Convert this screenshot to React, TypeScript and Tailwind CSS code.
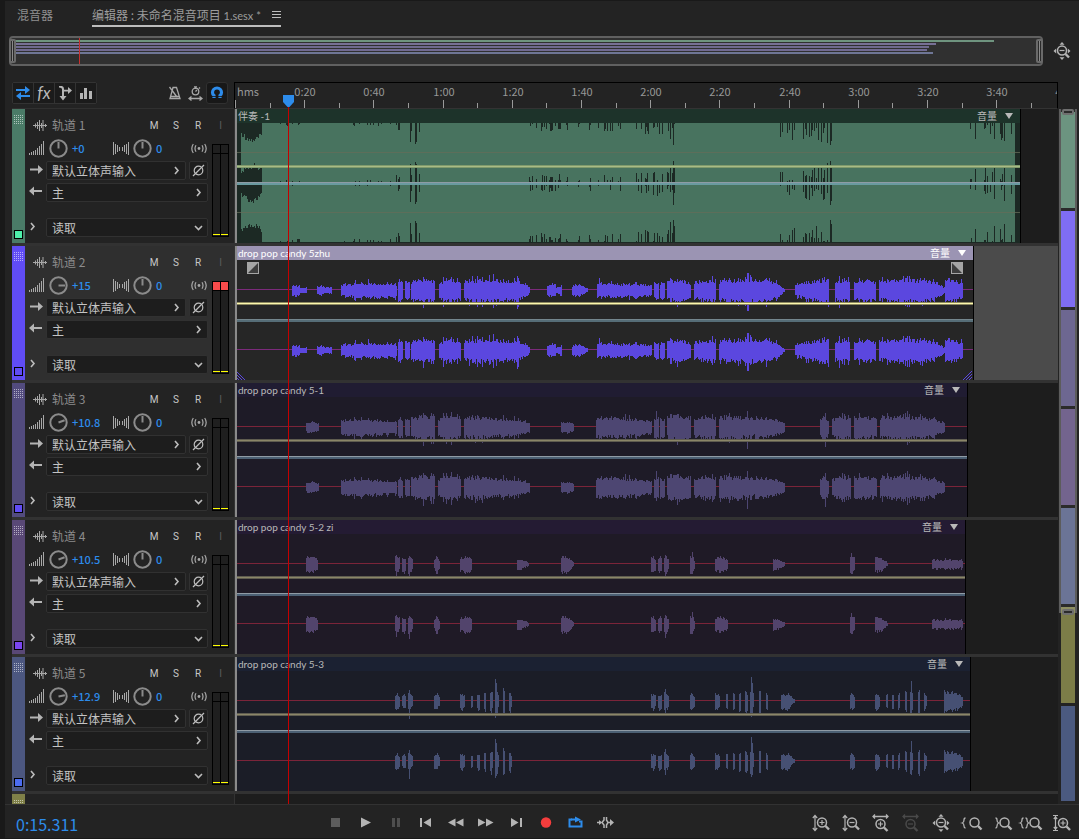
import React from "react";

type Burst = [start: number, end: number, head: number, mid: number, tail: number];
type Peak = [x: number, up: number, down: number];

interface Track {
  name: string;
  gain: string;
  angle: number;
  strip: string;
  led: string;
  selected?: boolean;
  clip: string;
  width: number;
  title: string;
  body: string;
  wave: string;
  axis: string;
  bursts: Burst[];
  peaks: Peak[];
}

const noise = (n: number) => {
  const s = Math.sin(n * 12.9898) * 43758.5453;
  return s - Math.floor(s);
};

const verse: Burst[] = [
  [106, 162, 6, 8, 7],
  [163, 168, 12, 12, 10],
  [170, 175, 9, 10, 9],
  [176, 200, 10, 12, 10],
  [204, 226, 8, 12, 10],
  [229, 280, 11, 12, 10],
  [280, 295, 12, 8, 4],
];

const backing: Burst[] = [
  [71, 84, 5, 6, 4],
  [106, 162, 8, 9, 6],
  [163, 168, 10, 11, 10],
  [170, 175, 9, 10, 9],
  [176, 200, 10, 13, 12],
  [203, 226, 9, 13, 11],
  [229, 265, 11, 11, 9],
  [265, 295, 10, 9, 5],
  [326, 339, 5, 6, 4],
  [361, 417, 10, 10, 7],
  [419, 424, 10, 11, 10],
  [425, 430, 10, 10, 9],
  [432, 456, 11, 13, 11],
  [459, 481, 9, 12, 11],
  [484, 520, 11, 12, 9],
  [520, 550, 11, 10, 5],
  [585, 594, 9, 13, 8],
  [597, 616, 9, 12, 11],
  [619, 642, 11, 12, 10],
  [645, 690, 11, 12, 10],
  [690, 710, 11, 9, 5],
];

const tracks: Track[] = [
  {
    name: "轨道 1", gain: "+0", angle: 0, strip: "bg-[#4a7b67]", led: "bg-[#4df0ab]",
    clip: "伴奏 -1", width: 785, title: "bg-[#1d332a]", body: "bg-[#1c2924]",
    wave: "#48735f", axis: "#646c58", bursts: [], peaks: [],
  },
  {
    name: "轨道 2", gain: "+15", angle: 90, strip: "bg-[#604cf5]", led: "bg-[#604cf5]", selected: true,
    clip: "drop pop candy 5zhu", width: 738, title: "bg-[#9b94b3]", body: "bg-[#262626]",
    wave: "#5b47df", axis: "#7b2a7b",
    bursts: [
      [57, 65, 5, 6, 5], [65, 72, 3, 3, 3],
      [82, 90, 4, 6, 4], [90, 97, 3, 3, 4],
      ...verse,
      [312, 321, 5, 7, 6], [321, 327, 3, 4, 6],
      [337, 353, 5, 6, 2],
      [362, 417, 7, 7, 6], [419, 424, 9, 9, 8], [425, 430, 7, 9, 9],
      [432, 456, 9, 12, 8], [459, 481, 9, 11, 11], [484, 535, 10, 12, 12], [535, 550, 10, 8, 2],
      [560, 594, 6, 10, 12], [600, 615, 10, 11, 10], [619, 641, 9, 12, 10],
      [644, 695, 10, 12, 11], [695, 710, 10, 8, 3], [710, 728, 13, 11, 8],
    ],
    peaks: [[120, 10, 11], [133, 11, 7], [188, 13, 18], [208, 13, 17], [258, 16, 18], [282, 14, 19], [283, 11, 17], [364, 12, 6], [512, 17, 21], [513, 17, 21], [589, 13, 14], [604, 14, 18], [672, 14, 17]],
  },
  {
    name: "轨道 3", gain: "+10.8", angle: 70, strip: "bg-[#524b7e]", led: "bg-[#604cf5]",
    clip: "drop pop candy 5-1", width: 732, title: "bg-[#201c32]", body: "bg-[#1e1b27]",
    wave: "#4d4672", axis: "#7b2439", bursts: backing,
    peaks: [[188, 14, 19], [208, 14, 15], [390, 13, 12], [421, 16, 14], [512, 16, 22], [672, 16, 18], [590, 14, 20]],
  },
  {
    name: "轨道 4", gain: "+10.5", angle: 70, strip: "bg-[#594876]", led: "bg-[#7a45f0]",
    clip: "drop pop candy 5-2 zi", width: 730, title: "bg-[#241b33]", body: "bg-[#1f1a26]",
    wave: "#52446c", axis: "#7b2439",
    bursts: [
      [71, 83, 8, 9, 6], [160, 165, 9, 9, 7], [167, 171, 7, 9, 7], [173, 178, 9, 9, 6],
      [199, 205, 4, 10, 4], [225, 237, 7, 9, 7], [282, 294, 6, 5, 2], [326, 339, 8, 9, 2],
      [416, 421, 8, 9, 6], [423, 427, 7, 9, 7], [429, 434, 9, 9, 6], [455, 460, 9, 10, 5],
      [480, 493, 7, 8, 6], [538, 550, 6, 5, 2], [615, 620, 9, 9, 7], [640, 653, 8, 7, 2],
      [697, 710, 6, 5, 4], [710, 728, 6, 5, 4],
    ],
    peaks: [[174, 8, 15], [161, 9, 13], [430, 9, 14], [616, 11, 10], [457, 12, 10]],
  },
  {
    name: "轨道 5", gain: "+12.9", angle: 78, strip: "bg-[#4c5780]", led: "bg-[#4c6cf0]",
    clip: "drop pop candy 5-3", width: 735, title: "bg-[#1b2132]", body: "bg-[#1b1d27]",
    wave: "#465073", axis: "#7b2439",
    bursts: [
      [160, 165, 7, 9, 6], [167, 171, 6, 9, 7], [173, 178, 8, 9, 5], [199, 205, 7, 9, 5],
      [225, 230, 8, 9, 6], [236, 238, 8, 8, 8], [242, 245, 9, 9, 9], [249, 251, 10, 10, 10],
      [255, 258, 11, 12, 9], [260, 264, 12, 13, 8], [268, 270, 14, 14, 14], [274, 277, 10, 11, 6],
      [416, 421, 8, 9, 6], [423, 427, 7, 9, 7], [429, 434, 9, 9, 6], [455, 460, 8, 9, 5],
      [480, 485, 8, 9, 6], [491, 493, 8, 8, 8], [498, 500, 9, 9, 9], [504, 506, 10, 10, 10],
      [510, 513, 11, 12, 9], [515, 519, 12, 13, 8], [524, 526, 14, 14, 14], [531, 533, 10, 10, 8],
      [546, 560, 8, 9, 2], [615, 620, 7, 9, 6], [640, 645, 8, 9, 6], [651, 653, 8, 8, 8],
      [657, 659, 8, 8, 8], [663, 665, 9, 9, 9], [670, 672, 11, 11, 11], [675, 678, 12, 13, 9],
      [683, 685, 14, 14, 14], [689, 692, 10, 10, 6], [709, 716, 11, 12, 9], [716, 728, 10, 9, 6],
    ],
    peaks: [[174, 11, 18], [260, 22, 17], [261, 18, 15], [430, 12, 14], [516, 24, 16], [517, 18, 14], [676, 20, 14]],
  },
];

const column = (x: number, y0: number, y1: number) => `M${x} ${y0}h1V${y1}h-1z`;

function burstPath(t: Track, centre: number) {
  let d = "";
  for (const [a, b, head, mid, tail] of t.bursts) {
    for (let x = a; x < b; x++) {
      const p = (x - a) / Math.max(1, b - a - 1);
      const amp = p < 0.5 ? head + (mid - head) * p * 2 : mid + (tail - mid) * (p - 0.5) * 2;
      const spike = b - a > 14 && noise(x * 5 + 2) > 0.86 ? 0.3 : 0;
      const up = Math.round(amp * (0.62 + 0.36 * noise(x + t.width) + spike));
      const down = Math.round(amp * (0.76 + 0.42 * noise(x * 3 + t.width) + spike));
      d += column(x, centre - up, centre + down);
    }
  }
  for (const [x, up, down] of t.peaks) d += column(x, centre - up, centre + down);
  return d;
}

const quiet: [start: number, end: number, depth: number, chance: number][] = [
  [42, 72, 4, 0.2],
  [98, 160, 3, 0.2],
  [161, 175, 9, 0.35],
  [289, 326, 9, 0.35],
  [330, 346, 7, 0.3],
  [354, 386, 9, 0.35],
  [398, 434, 13, 0.35],
  [434, 441, 22, 0.4],
  [545, 570, 17, 0.35],
  [570, 590, 19, 0.4],
  [592, 600, 22, 0.4],
  [728, 740, 9, 0.35],
  [740, 780, 18, 0.35],
];

const drops: Record<number, number> = { 175: 19, 176: 8, 180: 21, 181: 19, 184: 9, 438: 22, 595: 22, 596: 18, 759: 16, 769: 18 };

function gap(x: number, seed: number) {
  if (x < 27) return 6 + Math.round(8 * Math.sin(((x - 5) / 24) * Math.PI) + 6 * noise(x + seed));
  let depth = drops[x] ?? 0;
  for (const [a, b, max, chance] of quiet) {
    if (x >= a && x < b && noise(x * 7 + 1) < chance) depth = Math.max(depth, Math.round(max * noise(x + seed)));
  }
  return depth;
}

function fullPath() {
  let d = "";
  for (let x = 6; x < 780; x++) {
    d += column(x, gap(x, 3), 60 - gap(x, 11));
    d += column(x, 60 + gap(x, 23), 119 - gap(x, 31));
  }
  return d;
}

function Waveform({ track }: { track: Track }) {
  const full = track.bursts.length === 0;
  const sel = track.selected;
  const w = track.width;
  return (
    <svg width={w} height={120} viewBox={`0 0 ${w} 120`} shapeRendering="crispEdges" className="block" aria-hidden="true">
      {!full && <path d={`M0 29h${w}v1H0zM0 89h${w}v1H0z`} fill={track.axis} />}
      <path d={full ? fullPath() : burstPath(track, 30) + burstPath(track, 90)} fill={track.wave} />
      {full && <path d={`M0 29h${w}v1H0zM0 89h${w}v1H0z`} fill={track.axis} opacity="0.75" />}
      <rect y="42" width={w} height="3" fill={sel ? "#8d8960" : full ? "#7f9a6c" : "#5f5c50"} />
      <rect y="43" width={w} height="1" fill={sel ? "#fdf8ae" : full ? "#a9bb86" : "#8b8668"} />
      <rect y="59" width={w} height="1" fill={sel ? "#74868d" : "#8f9ba5"} />
      <rect y="60" width={w} height="2" fill={full ? "#6a9aa0" : sel ? "#566d77" : "#4c6074"} />
      {sel && (
        <path
          d={`M1 111l9 9M1 114l6 6M1 117l3 3M${w - 1} 111l-9 9M${w - 1} 114l-6 6M${w - 1} 117l-3 3`}
          stroke="#5b47df" fill="none"
        />
      )}
    </svg>
  );
}

function FadeHandle({ flip }: { flip?: boolean }) {
  return (
    <svg width="12" height="12" viewBox="0 0 12 12" aria-hidden="true" className={flip ? "-scale-x-100" : ""}>
      <rect width="12" height="12" fill="#a5a5a5" />
      <path d="M11 1v10H1z" fill="#3d3d3d" />
    </svg>
  );
}

function Knob({ angle, label }: { angle: number; label: string }) {
  return (
    <label className="relative block size-[19px] shrink-0">
      <svg width="19" height="19" viewBox="0 0 19 19" fill="none" stroke="#8b8b8b" strokeWidth="2" aria-hidden="true">
        <circle cx="9.5" cy="9.5" r="8.2" />
        <path d="M9.5 9.5V3" transform={`rotate(${angle} 9.5 9.5)`} />
      </svg>
      <input type="range" min="-100" max="100" defaultValue="0" aria-label={label} className="sr-only" />
    </label>
  );
}

function Picker({ label, value, down, className }: { label: string; value: string; down?: boolean; className: string }) {
  return (
    <div className={`relative h-[19px] ${className}`}>
      <select
        aria-label={label}
        className="block h-full w-full appearance-none rounded-[2px] border border-[#313131] bg-[#1d1d1d] pl-[5px] text-[12px] leading-[17px] text-[#c4c4c4]"
      >
        <option>{value}</option>
      </select>
      <svg
        width="9" height="9" viewBox="0 0 9 9" fill="none" stroke="#bdbdbd" strokeWidth="1.6" aria-hidden="true"
        className="pointer-events-none absolute top-[5px] right-[5px]"
      >
        <path d={down ? "M1 3l3.5 3.5L8 3" : "M3 1l3 3.5L3 8"} />
      </svg>
    </div>
  );
}

function Grip() {
  return (
    <svg width="9" height="10" viewBox="0 0 9 10" fill="#ffffff" opacity="0.55" shapeRendering="crispEdges" aria-hidden="true">
      {[0, 2, 4, 6, 8].map((y) => [0, 2, 4, 6, 8].map((x) => <rect key={`${x}-${y}`} x={x} y={y} width="1" height="1" />))}
    </svg>
  );
}

function Meter({ hot }: { hot?: boolean }) {
  return (
    <div className="grid h-[93px] w-[17px] grid-cols-2 gap-px border border-black bg-black">
      {[0, 1].map((c) => (
        <div key={c} className="flex flex-col">
          <div className={hot ? "h-2 bg-[#f84b4b]" : "h-2 bg-[#1f1f1f]"} />
          <div className="mt-px flex flex-1 flex-col justify-end bg-[#1f1f1f] pb-px">
            <div className="h-px bg-[#ffff00]" />
          </div>
        </div>
      ))}
    </div>
  );
}

function TrackHeader({ track }: { track: Track }) {
  return (
    <div className={`flex w-[222px] shrink-0 ${track.selected ? "bg-[#2f2f2f]" : "bg-[#232323]"}`}>
      <div className={`flex w-[13px] flex-col items-center justify-between pt-1.5 pb-1 ${track.strip}`}>
        <Grip />
        <div className={`size-[9px] border border-black ${track.led}`} />
      </div>
      <div className="flex w-[184px] flex-col pt-2">
        <div className="flex h-4 items-center pl-2">
          <svg width="14" height="12" viewBox="0 0 14 12" fill="#a8a8a8" aria-hidden="true">
            <path d="M0 6h14v1H0zM2 4.500h1v4H2zM4 3h1v7H4zM6 1h1v11H6zM8 4h1v5H8zM9.500 1h1v11h-1zM12 5h1v3h-1z" />
          </svg>
          <span className="ml-[5px] flex-1 text-[12px] leading-4 text-[#8c8c8c]">{track.name}</span>
          {["M", "S", "R"].map((b) => (
            <button key={b} className="w-[22px] pt-0.5 font-[Roboto] text-[10px] leading-[14px] text-[#c8c8c8]">{b}</button>
          ))}
        </div>
        <div className="mt-[5px] flex h-5 items-center gap-1 pr-px pl-1">
          <svg width="16" height="14" viewBox="0 0 16 14" fill="#a8a8a8" shapeRendering="crispEdges" aria-hidden="true">
            {[2, 3, 4, 5, 7, 9, 11, 14].map((h, i) => <rect key={h} x={i * 2} y={14 - h} width="1" height={h} />)}
          </svg>
          <Knob angle={track.angle} label={`${track.name} 音量`} />
          <span className="w-[37px] text-[11px] leading-5 font-medium text-[#2d8ceb]">{track.gain}</span>
          <svg width="16" height="13" viewBox="0 0 16 13" fill="#a8a8a8" shapeRendering="crispEdges" aria-hidden="true">
            {[13, 10, 7, 4, 4, 7, 10, 13].map((h, i) => (
              <rect key={i} x={i * 2 + (i > 3 ? 1 : 0)} y={(13 - h) / 2} width="1" height={h} />
            ))}
          </svg>
          <Knob angle={0} label={`${track.name} 声像`} />
          <span className="text-[11px] leading-5 font-medium text-[#2d8ceb]">0</span>
          <svg width="17" height="11" viewBox="0 0 17 11" fill="none" stroke="#a8a8a8" strokeWidth="1.2" className="ml-auto" aria-hidden="true">
            <circle cx="8" cy="5.5" r="1.4" fill="#a8a8a8" stroke="none" />
            <path d="M5 2.2q-2 3.3 0 6.6M2.300 1q-3 4.500 0 9M11 2.200q2 3.300 0 6.600M13.700 1q3 4.500 0 9" />
          </svg>
        </div>
        <div className="mt-[3px] flex items-start gap-[3px] pr-px pl-1">
          <div className="flex flex-1 gap-0.5">
            <svg width="15" height="17" viewBox="0 0 15 17" aria-hidden="true">
              <path d="M1 8.500h9" stroke="#b4b4b4" strokeWidth="2" />
              <path d="M9 4l5 4.500L9 13z" fill="#b4b4b4" />
            </svg>
            <Picker label={`${track.name} 输入`} value="默认立体声输入" className="flex-1" />
          </div>
          <button aria-label="反相" className="flex size-[19px] items-center justify-center rounded-[2px] border border-[#313131] bg-[#1d1d1d]">
            <svg width="13" height="13" viewBox="0 0 13 13" fill="none" stroke="#bdbdbd" strokeWidth="1.200" aria-hidden="true">
              <circle cx="6.500" cy="6.500" r="4.300" />
              <path d="M1 12L12 1" />
            </svg>
          </button>
        </div>
        <div className="mt-[3px] flex gap-0.5 pr-px pl-1">
          <svg width="15" height="17" viewBox="0 0 15 17" aria-hidden="true">
            <path d="M4 8h9" stroke="#b4b4b4" strokeWidth="2" />
            <path d="M5 3.500L0 8l5 4.500z" fill="#b4b4b4" />
          </svg>
          <Picker label={`${track.name} 输出`} value="主" className="flex-1" />
        </div>
        <div className="mt-4 flex gap-0.5 pr-px pl-1">
          <button aria-label="展开" className="flex w-[15px] items-center pb-1">
            <svg width="8" height="10" viewBox="0 0 8 10" fill="none" stroke="#bdbdbd" strokeWidth="1.600" aria-hidden="true">
              <path d="M2 2l3 3.500L2 9" />
            </svg>
          </button>
          <Picker label={`${track.name} 自动化`} value="读取" down className="flex-1" />
        </div>
      </div>
      <div className="ml-[3px] flex w-[17px] flex-col items-center pt-2">
        <button className="h-4 pt-0.5 font-[Roboto] text-[10px] leading-[14px] text-[#5c5c5c]">I</button>
        <div className="mt-[11px]">
          <Meter hot={track.selected} />
        </div>
      </div>
    </div>
  );
}

function TrackRow({ track }: { track: Track }) {
  const text = track.selected ? "text-white" : "text-[#b9b9b9]";
  return (
    <div className="flex h-[137px] shrink-0 border-b-[3px] border-[#323232]">
      <TrackHeader track={track} />
      <div className={`flex min-w-0 flex-1 overflow-hidden border-l border-[#333333] ${track.selected ? "bg-[#4b4b4b]" : "bg-[#1d1d1d]"}`}>
        <div className={`relative shrink-0 border-r border-black ${track.body}`}>
          <div className={`flex h-3.5 items-center pr-[7px] pl-[3px] text-[10px] leading-[14px] ${track.title} ${text}`}>
            <span className="flex-1 font-['Liberation_Sans_Narrow',Lato,'Noto_Sans_CJK_SC',sans-serif]">{track.clip}</span>
            <button className="flex items-center gap-2">
              音量
              <svg width="8" height="6" viewBox="0 0 8 6" fill="currentColor" aria-hidden="true">
                <path d="M0 0h8L4 6z" />
              </svg>
            </button>
          </div>
          <Waveform track={track} />
          <div className="absolute inset-y-0 left-0 w-0.5 bg-[#8a8a8a]" />
          {track.selected && (
            <div className="absolute inset-x-0 top-4 flex justify-between pr-2.5 pl-3">
              <FadeHandle />
              <FadeHandle flip />
            </div>
          )}
        </div>
      </div>
    </div>
  );
}

const tickX = (seconds: number) => Math.round(seconds * 3.46);
const clock = (s: number) => `${Math.floor(s / 60)}:${String(s % 60).padStart(2, "0")}`;
const majors = Array.from({ length: 12 }, (_, i) => (i + 1) * 20);
const minors = Array.from({ length: 12 }, (_, i) => i * 20 + 10);

function Ruler() {
  return (
    <div className="relative min-w-0 flex-1 overflow-hidden border-x border-t border-b border-black border-b-[#333333] text-[11px] leading-4 text-[#979797]">
      <span className="absolute top-0 left-0.5">hms</span>
      {majors.map((s) => (
        <span key={s} className="absolute top-0 w-10 -translate-x-1/2 text-center" style={{ left: tickX(s) + 1 }}>
          {clock(s)}
        </span>
      ))}
      <svg width="840" height="25" viewBox="0 0 840 25" fill="#9a9a9a" shapeRendering="crispEdges" className="absolute top-0 left-0" aria-hidden="true">
        <rect x="0" y="17" width="1" height="8" />
        {majors.map((s) => <rect key={s} x={tickX(s)} y="17" width="1" height="8" />)}
        {minors.map((s) => <rect key={s} x={tickX(s)} y="20" width="1" height="5" />)}
      </svg>
    </div>
  );
}

function Magnifier({ x, y, sign }: { x: number; y: number; sign?: "+" | "-" }) {
  return (
    <g>
      <circle cx={x} cy={y} r="4.500" strokeWidth="1.500" />
      <path d={`M${x + 3.5} ${y + 3.5}l3.500 3.500`} strokeWidth="2.400" />
      {sign && <path d={`M${x - 2.5} ${y}h5${sign === "+" ? `M${x} ${y - 2.5}v5` : ""}`} strokeWidth="1.200" />}
    </g>
  );
}

function ZoomIcon({ children, dim }: { children: React.ReactNode; dim?: boolean }) {
  return (
    <svg width="18" height="18" viewBox="0 0 18 18" fill="none" stroke={dim ? "#4a4a4a" : "#b4b4b4"} className="overflow-visible" aria-hidden="true">
      {children}
    </svg>
  );
}

const vertical = <path d="M3 2v14M.8 4L3 1.500 5.200 4M.8 14L3 16.500 5.200 14" strokeWidth="1.200" />;
const horizontal = <path d="M1 2.500h15M3 .5L1 2.500 3 4.500M14 .5l2 2-2 2" strokeWidth="1.300" />;
const fourWay = <path d="M9 0l2.500 2.800h-5zM9 18l2.500-2.800h-5zM.5 9l2.700-2.500v5zM17.500 9l-2.700-2.500v5z" fill="#b4b4b4" stroke="none" />;
const openBrace = "M3.500 4Q2 4 2 6q0 2.500-1.700 3Q2 9.500 2 12q0 2 1.500 2";
const closeBrace = "M3.500 4Q5 4 5 6q0 2.500 1.700 3Q5 9.500 5 12q0 2-1.500 2";

const zoomTools: { label: string; icon: React.ReactNode; dim?: boolean }[] = [
  { label: "垂直放大", icon: <>{vertical}<Magnifier x={10} y={8.5} sign="+" /></> },
  { label: "垂直缩小", icon: <>{vertical}<Magnifier x={10} y={8.5} sign="-" /></> },
  { label: "水平放大", icon: <>{horizontal}<Magnifier x={8.5} y={10} sign="+" /></> },
  { label: "水平缩小", icon: <>{horizontal}<Magnifier x={8.5} y={10} sign="-" /></>, dim: true },
  { label: "全部缩小", icon: <>{fourWay}<Magnifier x={9} y={8.5} sign="-" /></> },
  { label: "放大入点", icon: <><path d={openBrace} strokeWidth="1.300" /><Magnifier x={12.5} y={8.5} /></> },
  { label: "放大出点", icon: <><path d={closeBrace} strokeWidth="1.300" /><Magnifier x={12.5} y={8.5} /></> },
  { label: "缩放至选区", icon: <><path d={openBrace} transform="translate(-2 0)" strokeWidth="1.300" /><path d={closeBrace} strokeWidth="1.300" /><Magnifier x={12.5} y={8.5} /></> },
  { label: "缩放至轨道", icon: <><path d="M1 1.500h5M1 16.500h5M3.500 2v14M1.800 5l1.700-2 1.700 2M1.800 13l1.700 2 1.700-2" strokeWidth="1.200" /><Magnifier x={11} y={9} sign="+" /></> },
];

const transport: { label: string; icon: React.ReactNode }[] = [
  { label: "停止", icon: <rect x="4" y="4" width="9" height="9" fill="#5c5c5c" /> },
  { label: "播放", icon: <path d="M4 3.500l10 5-10 5z" /> },
  { label: "暂停", icon: <path d="M5 4h3v9H5zM10 4h3v9h-3z" fill="#4e4e4e" /> },
  { label: "转到上一个", icon: <path d="M3 4h2v9H3zM14 4v9L6.500 8.500z" /> },
  { label: "快退", icon: <path d="M8.500 4.500v8L1 8.500zM16.500 4.500v8L9 8.500z" /> },
  { label: "快进", icon: <path d="M1 4.500v8l7.500-4zM9 4.500v8l7.500-4z" /> },
  { label: "转到下一个", icon: <path d="M13 4h2v9h-2zM4 4v9l7.500-4.500z" /> },
  { label: "录制", icon: <circle cx="9" cy="8.500" r="5.200" fill="#f53d3d" /> },
  {
    label: "循环播放",
    icon: <><path d="M5 5.500H2.500v7h12v-5H12" fill="none" stroke="#2d8ceb" strokeWidth="2" /><path d="M8 2.500L14 5.500l-6 3v-2H4v-2h4z" fill="#2d8ceb" /></>,
  },
  {
    label: "跳过所选项目",
    icon: <><path d="M0 8.500h4M11 8.500h4M7 3v3L5 8.500 7 11v3M9.500 3v3l1.500 2.500L9.500 11v3" fill="none" stroke="#b4b4b4" strokeWidth="1.500" /><path d="M13 5l4 3.500-4 3.500zM2 6l3 2.500-3 2.500z" /></>,
  },
];

const overview = [
  "mr-[47px] bg-[#6f947f]",
  "mr-[105px] bg-[#777096]",
  "mr-28 bg-[#6f6a8f]",
  "mr-[114px] bg-[#716a92]",
  "mr-[108px] bg-[#6f7696]",
];

function Toggle({ label, children }: { label: string; children: React.ReactNode }) {
  return (
    <button aria-label={label} className="flex size-5 items-center justify-center bg-[#1b1b1b]">
      {children}
    </button>
  );
}

export default function App() {
  return (
    <div className="flex h-screen flex-col overflow-hidden border-t border-b border-l-[5px] border-[#191919] bg-[#232323] font-['Noto_Sans_CJK_SC',sans-serif] text-[#b9b9b9]">
      <nav className="flex h-[35px] shrink-0 items-start pl-3 text-[12px] leading-4">
        <button className="mt-1.5 text-[#8f8f8f]">混音器</button>
        <div className="ml-[39px] flex h-[26px] items-center gap-[11px] border-b-2 border-[#bdbdbd] pt-1">
          <button className="whitespace-pre text-[#9c9c9c]">
            编辑器 : 未命名混音项目<span className="font-[Lato,sans-serif] text-[11px]"> 1.sesx *</span>
          </button>
          <button aria-label="面板菜单">
            <svg width="9" height="8" viewBox="0 0 9 8" fill="#bdbdbd" shapeRendering="crispEdges" aria-hidden="true">
              <path d="M0 0h9v1H0zM0 3h9v1H0zM0 6h9v1H0z" />
            </svg>
          </button>
        </div>
      </nav>

      <div className="flex h-[30px] shrink-0 items-center pr-2 pl-1">
        <div className="relative h-[30px] flex-1 rounded-[4px] border-2 border-[#606060] bg-[#303030] pt-0.5">
          <div className="flex flex-col gap-px pl-1">
            {overview.map((bar) => <div key={bar} className={`h-0.5 ${bar}`} />)}
          </div>
          <div className="absolute inset-y-0 left-[68px] w-px bg-[#c8302f]" />
          <div className="absolute -left-0.5 top-px h-6 w-[7px] rounded-[2px] border-2 border-[#6a6a6a] bg-[#2a2a2a] px-px">
            <div className="h-full w-px bg-[#8a8a8a]" />
          </div>
          <div className="absolute top-px -right-0.5 h-6 w-[7px] rounded-[2px] border-2 border-[#6a6a6a] bg-[#2a2a2a] px-px">
            <div className="h-full w-px bg-[#8a8a8a]" />
          </div>
        </div>
        <button aria-label="全部缩小" className="ml-[10px]">
          <ZoomIcon>{fourWay}<Magnifier x={9} y={8.5} sign="-" /></ZoomIcon>
        </button>
      </div>

      <div className="mt-4 flex min-h-0 flex-1 pr-0.5 pl-[7px]">
        <main className="relative flex min-w-0 flex-1 flex-col overflow-hidden">
          <div className="flex h-[27px] shrink-0">
            <div className="flex w-[222px] shrink-0 items-start justify-between border-b border-[#303030] pr-1.5">
              <div className="flex gap-px rounded-[2px] border border-[#333333] bg-[#333333]">
                <Toggle label="输入/输出">
                  <svg width="16" height="14" viewBox="0 0 16 14" aria-hidden="true">
                    <path d="M1 4h10M5 10h10" stroke="#2d8ceb" strokeWidth="2" />
                    <path d="M10 0l5 4-5 4zM6 6l-5 4 5 4z" fill="#2d8ceb" />
                  </svg>
                </Toggle>
                <Toggle label="效果">
                  <span className="font-[Lato,sans-serif] text-[17px] leading-5 text-[#b9b9b9] italic">fx</span>
                </Toggle>
                <Toggle label="发送">
                  <svg width="14" height="16" viewBox="0 0 14 16" fill="#b4b4b4" aria-hidden="true">
                    <path d="M1 1h3q2 .5 2 3v.700h4V2l4 3.500L10 9V6.500H6V11h2.500L5 15.500 1.500 11H4V4Q4 2.700 1 2.500z" />
                  </svg>
                </Toggle>
                <Toggle label="均衡">
                  <svg width="12" height="12" viewBox="0 0 12 12" fill="#b4b4b4" shapeRendering="crispEdges" aria-hidden="true">
                    <path d="M0 6h3v6H0zM4 1h3v11H4zM9 4h3v8H9z" />
                  </svg>
                </Toggle>
              </div>
              <div className="flex items-center gap-[3px]">
                <button aria-label="节拍器" className="mr-[3px]">
                  <svg width="14" height="14" viewBox="0 0 14 14" fill="none" stroke="#a8a8a8" strokeWidth="1.300" aria-hidden="true">
                    <path d="M5 1.500h3.500L12 12.500H2zM1.500 1L9 11M3 10.500h8" />
                  </svg>
                </button>
                <button aria-label="时间伸缩">
                  <svg width="15" height="15" viewBox="0 0 15 15" fill="none" stroke="#a8a8a8" strokeWidth="1.300" aria-hidden="true">
                    <circle cx="7.500" cy="5.500" r="3.300" />
                    <path d="M6 .8h3M7.500 1v2M7.500 5.500l1.500-1.500M11 1.500l1 1M1 12.500h13M3.500 10.500l-2.500 2 2.500 2M11.500 10.500l2.500 2-2.500 2" />
                  </svg>
                </button>
                <button aria-label="对齐" className="flex size-[22px] items-center justify-center rounded-[3px] border border-[#303030] bg-[#181818]">
                  <svg width="14" height="14" viewBox="0 0 14 14" aria-hidden="true">
                    <path d="M4 12V9.500Q2.500 8.500 2.500 6.500a4.500 4.500 0 0 1 9 0Q11.500 8.500 10 9.500V12" fill="none" stroke="#2d8ceb" strokeWidth="3.200" />
                    <path d="M2 10.500h4M8 10.500h4" stroke="#181818" strokeWidth="0.800" />
                  </svg>
                </button>
              </div>
            </div>
            <Ruler />
          </div>

          {tracks.map((t) => <TrackRow key={t.name} track={t} />)}
          <div className="flex min-h-0 flex-1 overflow-hidden">
            <div className="flex w-[13px] justify-center bg-[#7f8048] pt-1.5">
              <Grip />
            </div>
            <div className="w-[209px]" />
            <div className="flex-1 border-l border-[#333333] bg-[#1d1d1d]" />
          </div>

          <div className="absolute top-[25px] bottom-0 left-[276px] w-px bg-[#c40000]" />
          <svg width="11" height="12" viewBox="0 0 11 12" fill="#2d8ceb" className="absolute top-[13px] left-[271px]" aria-hidden="true">
            <path d="M0 0h11v7L6.500 12h-2L0 7z" />
          </svg>
        </main>

        <aside className="ml-px flex w-[18px] flex-col pt-[27px]" aria-label="轨道导航">
          <div className="relative flex h-[504px] flex-col gap-[3px] border-x-2 border-[#5c5c5c] bg-[#2b2b2b] pt-[3px]">
            <div className="h-24 bg-[#6c9480]" />
            <div className="h-24 bg-[#7f6df3]" />
            <div className="h-24 bg-[#6d6791]" />
            <div className="h-24 bg-[#73648e]" />
            <div className="h-24 bg-[#6b7496]" />
            <div className="flex-1 bg-[#8e8f62]" />
            <div className="absolute inset-x-px top-0 h-1.5 rounded-[2px] border-2 border-[#6f6f6f] bg-[#2b2b2b]" />
            <div className="absolute inset-x-px -bottom-0.5 h-1.5 rounded-[2px] border-2 border-[#6f6f6f] bg-[#2b2b2b]" />
          </div>
          <div className="mx-0.5 flex min-h-0 flex-1 flex-col gap-[3px] pb-[3px]">
            <div className="h-[90px] bg-[#7c7d48]" />
            <div className="flex-1 bg-[#4b5a80]" />
          </div>
        </aside>
      </div>

      <footer className="flex h-[34px] shrink-0 items-center border-t border-[#323232] pt-0.5 pr-[9px] pl-[11px]">
        <output className="w-[304px] pt-0.5 text-[16px] leading-6 text-[#2d8ceb]">0:15.311</output>
        <div className="flex">
          {transport.map((b) => (
            <button key={b.label} aria-label={b.label} className="flex h-[31px] w-[30px] items-center justify-center">
              <svg width="17" height="17" viewBox="0 0 17 17" fill="#b4b4b4" aria-hidden="true">{b.icon}</svg>
            </button>
          ))}
        </div>
        <div className="ml-auto flex gap-3">
          {zoomTools.map((z) => (
            <button key={z.label} aria-label={z.label}>
              <ZoomIcon dim={z.dim}>{z.icon}</ZoomIcon>
            </button>
          ))}
        </div>
      </footer>
    </div>
  );
}
